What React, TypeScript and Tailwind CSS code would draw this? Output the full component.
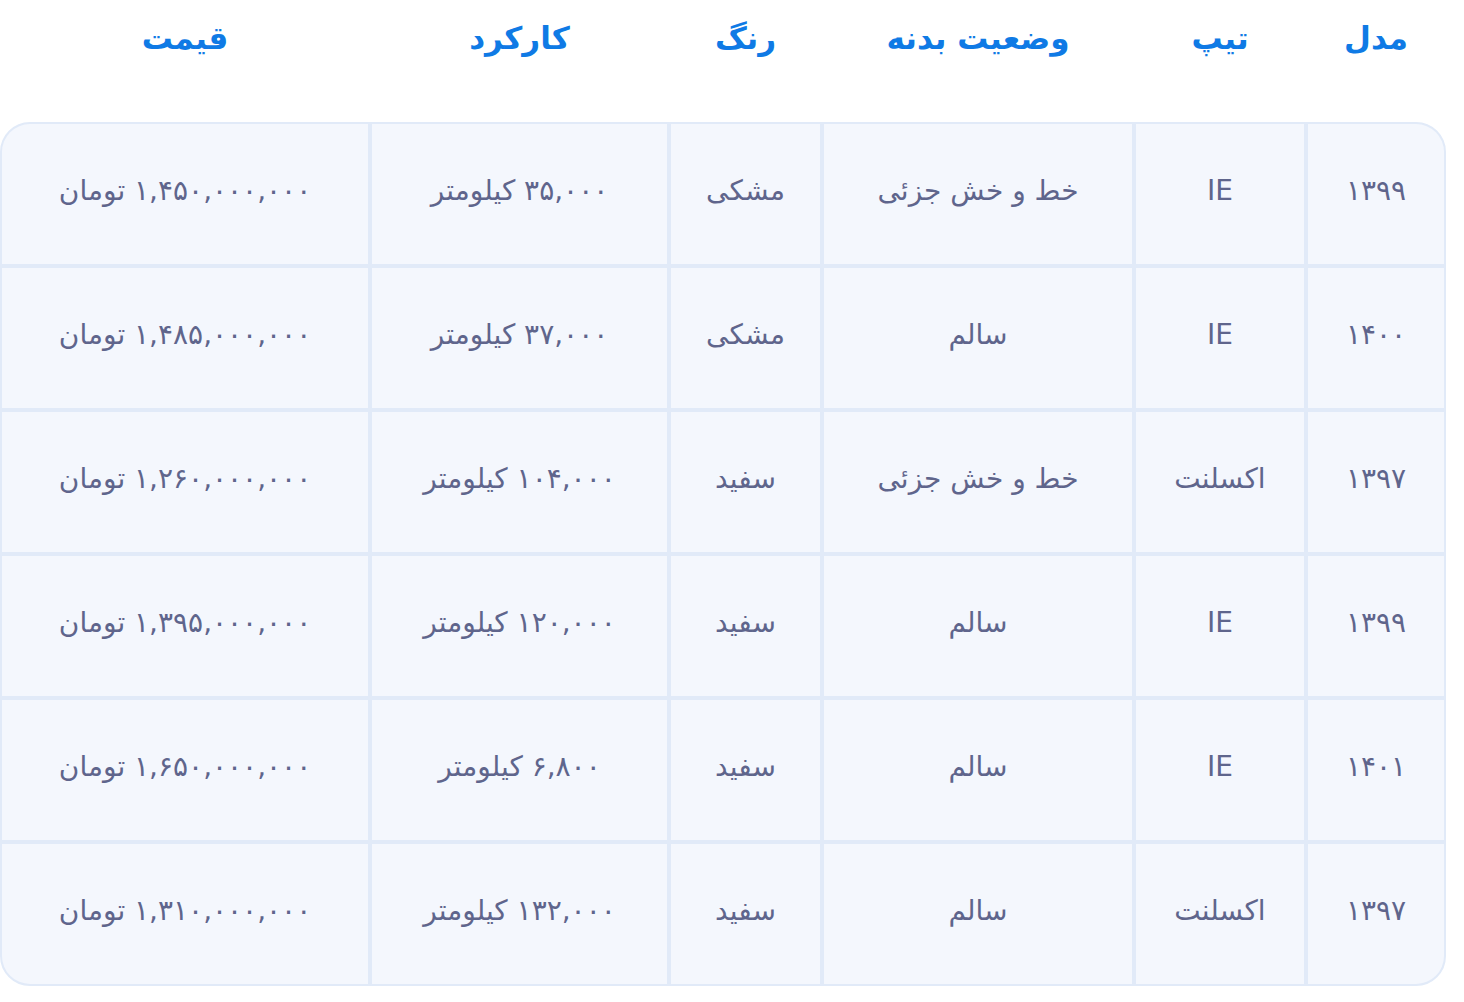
import React from "react";

const rows = [
  ["۱۳۹۹", "IE", "خط و خش جزئی", "مشکی", "۳۵,۰۰۰ کیلومتر", "۱,۴۵۰,۰۰۰,۰۰۰ تومان"],
  ["۱۴۰۰", "IE", "سالم", "مشکی", "۳۷,۰۰۰ کیلومتر", "۱,۴۸۵,۰۰۰,۰۰۰ تومان"],
  ["۱۳۹۷", "اکسلنت", "خط و خش جزئی", "سفید", "۱۰۴,۰۰۰ کیلومتر", "۱,۲۶۰,۰۰۰,۰۰۰ تومان"],
  ["۱۳۹۹", "IE", "سالم", "سفید", "۱۲۰,۰۰۰ کیلومتر", "۱,۳۹۵,۰۰۰,۰۰۰ تومان"],
  ["۱۴۰۱", "IE", "سالم", "سفید", "۶,۸۰۰ کیلومتر", "۱,۶۵۰,۰۰۰,۰۰۰ تومان"],
  ["۱۳۹۷", "اکسلنت", "سالم", "سفید", "۱۳۲,۰۰۰ کیلومتر", "۱,۳۱۰,۰۰۰,۰۰۰ تومان"],
];

const headers = ["مدل", "تیپ", "وضعیت بدنه", "رنگ", "کارکرد", "قیمت"];

export default function App() {
  return (
    <div
      dir="rtl"
      className="w-[1464px] h-[1002px] bg-white overflow-hidden"
      style={{ fontFamily: '"DejaVu Sans", "Noto Sans", sans-serif' }}
    >
      <div className="w-[1446px] ml-auto mr-[18px]">
        <div className="grid grid-cols-[136px_168px_308px_149px_295px_366px] gap-x-[4px] px-[2px] h-[122px] items-start pt-[16px]">
          {headers.map((h) => (
            <div key={h} className="text-center text-[31px] leading-[44px] font-bold text-[#0f7ae5]">
              {h}
            </div>
          ))}
        </div>
        <div className="rounded-[30px] border-2 border-[#e1eaf8] bg-[#e1eaf8] overflow-hidden">
          <div className="grid grid-cols-[136px_168px_308px_149px_295px_366px] gap-[4px]">
            {rows.map((r, i) =>
              r.map((c, j) => (
                <div
                  key={`${i}-${j}`}
                  className="h-[140px] bg-[#f4f7fd] flex items-center justify-center pb-[6px] text-[28px] text-[#5f658c]"
                >
                  {c}
                </div>
              ))
            )}
          </div>
        </div>
      </div>
    </div>
  );
}
